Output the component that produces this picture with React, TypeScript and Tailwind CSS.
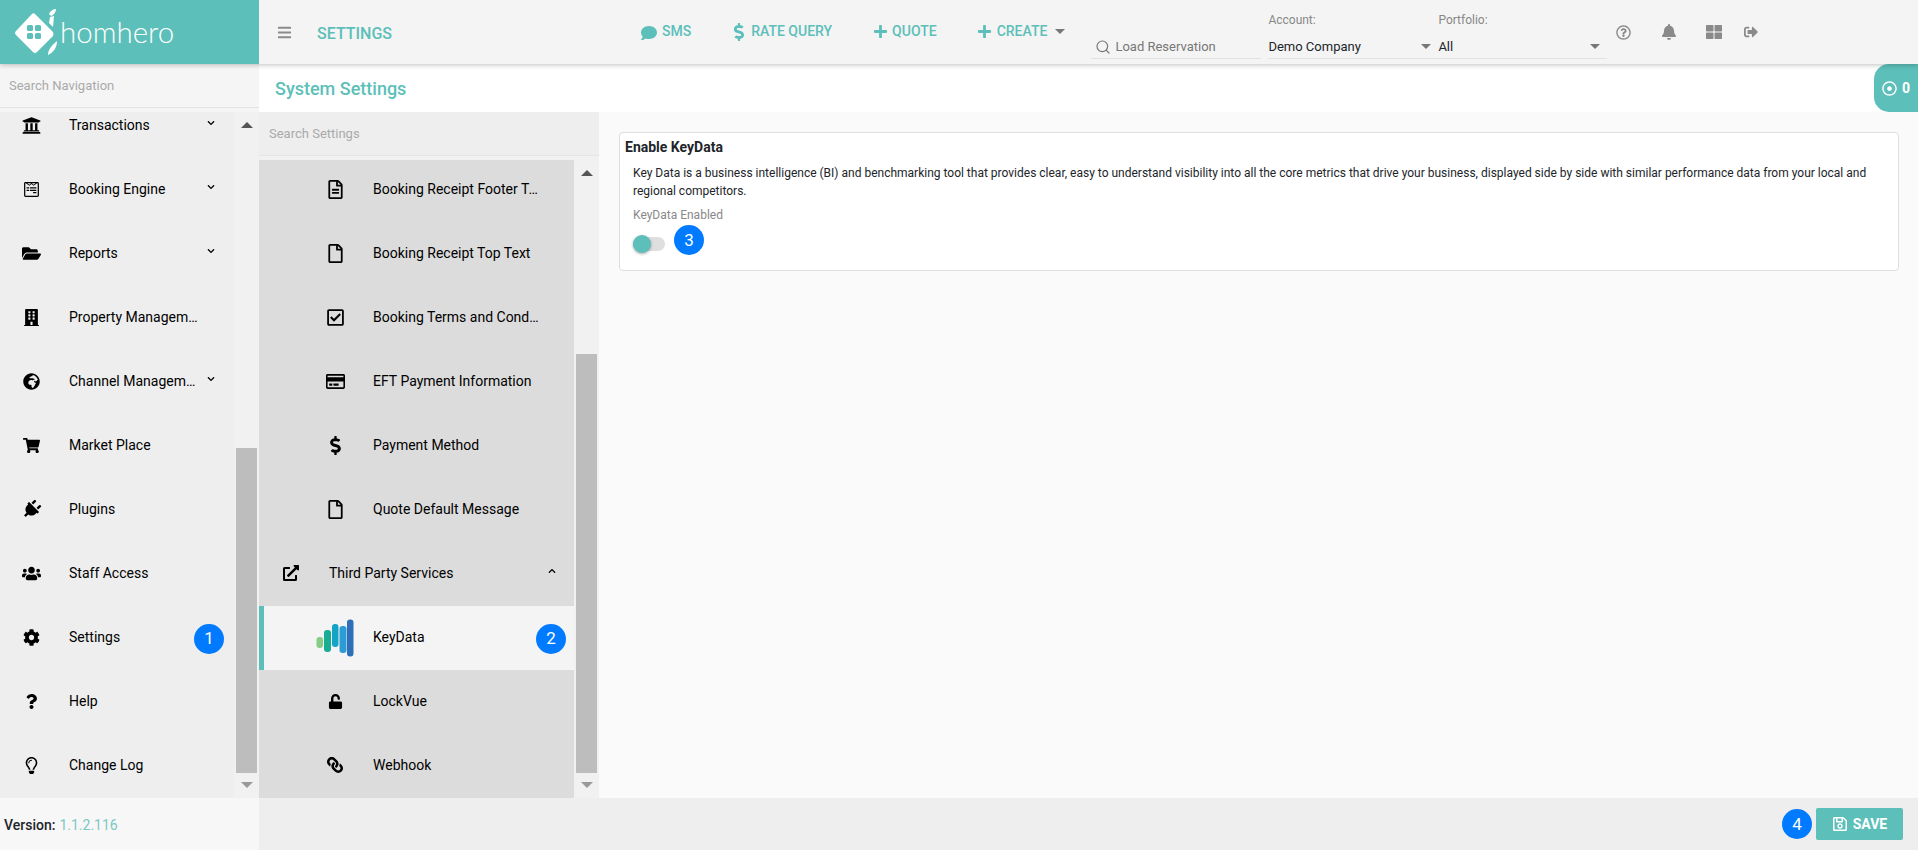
import React from "react";
import { Search } from "lucide-react";
import {
  FaBars, FaBell, FaBuilding, FaChevronDown, FaChevronUp, FaCog, FaComment, FaDollarSign, FaExternalLinkAlt,
  FaFolderOpen, FaGlobeAfrica, FaLink, FaPlug, FaPlus, FaQuestion, FaRegCheckSquare, FaRegCreditCard, FaRegDotCircle,
  FaRegFile, FaRegFileAlt, FaRegLightbulb, FaRegQuestionCircle, FaRegSave, FaShoppingCart, FaSignOutAlt,
  FaThLarge, FaUniversity, FaUnlock, FaUsers, FaWpforms,
} from "react-icons/fa";

function Badge({ n, className = "" }: { n: number; className?: string }) {
  return (
    <span className={"flex h-[30px] w-[30px] shrink-0 items-center justify-center rounded-full bg-[#007bff] text-[17px] leading-none text-white " + className}>
      {n}
    </span>
  );
}

function Caret({ className = "" }: { className?: string }) {
  return <span className={"block h-0 w-0 border-x-[5px] border-t-[5px] border-x-transparent border-t-[#777] " + className} />;
}

function ScrollArrow({ up }: { up?: boolean }) {
  return up ? (
    <span className="block h-0 w-0 border-x-[6px] border-b-[6px] border-x-transparent border-b-[#555]" />
  ) : (
    <span className="block h-0 w-0 border-x-[6px] border-t-[6px] border-x-transparent border-t-[#999]" />
  );
}

function NavRow({ icon, label, chevron, badge }: { icon: React.ReactNode; label: string; chevron?: boolean; badge?: number }) {
  return (
    <div className="flex h-[64px] shrink-0 items-center text-black">
      <span className="flex w-[69px] shrink-0 justify-center pr-[7px] text-[19px]">{icon}</span>
      <span className="w-[130px] shrink-0 truncate text-[14px]">{label}</span>
      {chevron && <FaChevronDown className="-mt-[4px] ml-[8px] text-[8px]" />}
      {badge && <Badge n={badge} className="-ml-[5px] mt-[3px]" />}
    </div>
  );
}

function SettingRow({ icon, label, className = "h-[64px]" }: { icon: React.ReactNode; label: string; className?: string }) {
  return (
    <div className={"flex shrink-0 items-center text-black " + className}>
      <span className="flex w-[114px] shrink-0 justify-center pl-[38px] text-[19px]">{icon}</span>
      <span className="w-[168px] shrink-0 truncate text-[14px]">{label}</span>
    </div>
  );
}

function KeyDataLogo() {
  return (
    <svg width="38" height="38" viewBox="0 0 38 38" className="block">
      <rect x="0.5" y="18" width="6.5" height="11" rx="3" fill="#86cc84" />
      <rect x="8" y="11" width="7" height="22" rx="3" fill="#19ad94" />
      <rect x="16" y="5" width="6.5" height="23" rx="3" fill="#14a5c6" />
      <rect x="23.5" y="7" width="7" height="27" rx="3" fill="#2d9bd4" />
      <rect x="31" y="0.5" width="6.5" height="37" rx="3" fill="#2f6fb8" />
    </svg>
  );
}

function Logo() {
  return (
    <svg width="50" height="50" viewBox="0 0 50 50" className="block shrink-0">
      <path d="M24 7 L42 25 Q43 27 42 29 L26 45 Q24 47 22 45 L5 28 Q3 26 5 24 L20 8 Q22 5 24 7 Z" fill="#fff" />
      <path d="M38 7 C39 4 42 2 45 2 C45 5 43 8 40 9 Z M39 10 L43 9 L42 20 L38 16 Z" fill="#fff" />
      <path d="M37 48 C37 43 40 39 46 34 C46 40 43 45 37 48 Z" fill="#fff" />
      <g fill="#5cbfb9">
        <rect x="16" y="18" width="6" height="6" rx="1.5" />
        <rect x="24" y="18" width="6" height="6" rx="1.5" />
        <rect x="16" y="26" width="6" height="6" rx="1.5" />
        <rect x="24" y="26" width="6" height="6" rx="1.5" />
      </g>
    </svg>
  );
}

function TopLink({ icon, label, className = "" }: { icon: React.ReactNode; label: string; className?: string }) {
  return (
    <div className={"flex items-center text-[14px] font-medium text-[#5cbfb9] " + className}>
      {icon}
      <span>{label}</span>
    </div>
  );
}

export default function App() {
  return (
    <div className="flex h-[850px] w-[1918px] flex-col overflow-hidden bg-white font-['Roboto',sans-serif]">
      <header className="relative z-10 flex h-[64px] shrink-0 bg-[#f4f4f4] shadow-[0_1px_5px_rgba(0,0,0,0.25)]">
        <div className="flex w-[259px] shrink-0 items-center bg-[#5cbfb9] pl-[11px] text-white">
          <Logo />
          <span className="-ml-[1px] font-['Lato',sans-serif] text-[29.5px] font-light leading-none">homhero</span>
        </div>
        <div className="flex h-full items-start">
          <FaBars className="ml-[18px] mt-[25px] text-[15px] text-[#8a8a8a]" />
          <span className="ml-[25px] mt-[22px] text-[16px] font-medium text-[#5cbfb9]">SETTINGS</span>
          <TopLink className="ml-[249px] mt-[21px]" icon={<FaComment className="mr-[5px] mt-[2px] text-[16px]" />} label="SMS" />
          <TopLink className="ml-[39px] mt-[21px]" icon={<FaDollarSign className="mr-[3px] text-[18px]" />} label="RATE QUERY" />
          <TopLink className="ml-[41px] mt-[21px]" icon={<FaPlus className="mr-[4px] text-[15px]" />} label="QUOTE" />
          <TopLink className="ml-[40px] mt-[21px]" icon={<FaPlus className="mr-[5px] text-[15px]" />} label="CREATE" />
          <Caret className="ml-[8px] mt-[29px] border-t-[#5cbfb9]" />
          <div className="ml-[26px] mt-[34px] flex h-[25px] w-[170px] items-center border-b border-[#e2e2e2] pl-[4px] pt-[2px]">
            <Search size={16} strokeWidth={1.8} className="mr-[4px] text-[#777]" />
            <span className="text-[13px] text-[#777]">Load Reservation</span>
          </div>
          <div className="ml-[7px] mt-[13px] w-[170px] border-b border-[#e2e2e2]">
            <div className="text-[12px] leading-[14px] text-[#888]">Account:</div>
            <div className="mt-[8px] flex h-[23px] items-center pr-[7px] text-[13px] text-[#212529]">
              Demo Company
              <Caret className="ml-auto" />
            </div>
          </div>
          <div className="mt-[13px] w-[169px] border-b border-[#e2e2e2]">
            <div className="text-[12px] leading-[14px] text-[#888]">Portfolio:</div>
            <div className="mt-[8px] flex h-[23px] items-center pr-[7px] text-[13px] text-[#212529]">
              All
              <Caret className="ml-auto" />
            </div>
          </div>
          <FaRegQuestionCircle className="ml-[9px] mt-[25px] text-[15px] text-[#8a8a8a]" />
          <FaBell className="ml-[30px] mt-[24px] text-[16px] text-[#8a8a8a]" />
          <FaThLarge className="ml-[29px] mt-[24px] text-[16px] text-[#8a8a8a]" />
          <FaSignOutAlt className="ml-[22px] mt-[25px] text-[14px] text-[#8a8a8a]" />
        </div>
      </header>

      <div className="flex min-h-0 flex-1">
        <aside className="flex w-[259px] shrink-0 flex-col bg-[#f5f5f5]">
          <div className="h-[44px] shrink-0 border-b border-[#e2e2e2] pl-[9px] pt-[14px] text-[13px] leading-[16px] text-[#aaa]">Search Navigation</div>
          <div className="mt-[4px] flex min-h-0 flex-1">
            <div className="flex w-[234px] flex-col overflow-hidden bg-[#eeeeee]">
              <div className="-mt-[19px] flex flex-col">
                <NavRow icon={<FaUniversity />} label="Transactions" chevron />
                <NavRow icon={<FaWpforms className="text-[17px]" />} label="Booking Engine" chevron />
                <NavRow icon={<FaFolderOpen />} label="Reports" chevron />
                <NavRow icon={<FaBuilding className="text-[17px]" />} label="Property Management" />
                <NavRow icon={<FaGlobeAfrica className="text-[17px]" />} label="Channel Management" chevron />
                <NavRow icon={<FaShoppingCart className="text-[17px]" />} label="Market Place" />
                <NavRow icon={<FaPlug className="rotate-45" />} label="Plugins" />
                <NavRow icon={<FaUsers />} label="Staff Access" />
                <NavRow icon={<FaCog className="text-[17px]" />} label="Settings" badge={1} />
                <NavRow icon={<FaQuestion className="text-[15px]" />} label="Help" />
                <NavRow icon={<FaRegLightbulb className="text-[17px]" />} label="Change Log" />
              </div>
            </div>
            <div className="flex w-[25px] flex-col items-center bg-[#f1f1f1] pt-[10px]">
              <ScrollArrow up />
              <div className="mt-[320px] h-[325px] w-[21px] shrink-0 bg-[#bdbdbd]" />
              <div className="mt-[9px]"><ScrollArrow /></div>
            </div>
          </div>
          <div className="flex h-[52px] shrink-0 items-center bg-[#f7f7f7] pl-[4px] pt-[2px] text-[14px]">
            <span className="font-medium text-[#212529]">Version:</span>
            <span className="ml-[4px] text-[#7cc8c3]">1.1.2.116</span>
          </div>
        </aside>

        <main className="flex min-w-0 flex-1 flex-col">
          <div className="flex h-[48px] shrink-0 items-center bg-white pl-[16px]">
            <h1 className="text-[18px] font-medium text-[#5cbfb9]">System Settings</h1>
            <div className="ml-auto flex h-full w-[44px] items-center justify-center rounded-l-[15px] bg-[#5cbfb9] text-[14px] font-bold text-white">
              <FaRegDotCircle className="mr-[5px] text-[15px]" />0
            </div>
          </div>
          <div className="flex min-h-0 flex-1">
            <section className="flex w-[340px] shrink-0 flex-col bg-[#f1f1f1]">
              <div className="h-[44px] shrink-0 border-b border-[#e4e4e4] bg-[#eeeeee] pl-[10px] pt-[14px] text-[13px] leading-[16px] text-[#aaa]">Search Settings</div>
              <div className="mt-[4px] flex min-h-0 flex-1">
                <div className="flex w-[315px] flex-col overflow-hidden bg-[#dcdcdc]">
                  <div className="-mt-[3px] flex flex-col">
                    <SettingRow icon={<FaRegFileAlt />} label="Booking Receipt Footer Text" />
                    <SettingRow icon={<FaRegFile />} label="Booking Receipt Top Text" />
                    <SettingRow icon={<FaRegCheckSquare />} label="Booking Terms and Conditions" />
                    <SettingRow icon={<FaRegCreditCard className="text-[19px]" />} label="EFT Payment Information" />
                    <SettingRow icon={<FaDollarSign />} label="Payment Method" />
                    <SettingRow icon={<FaRegFile />} label="Quote Default Message" />
                    <div className="flex h-[65px] shrink-0 items-center pb-[1px] text-black">
                      <span className="flex w-[70px] shrink-0 justify-center pr-[6px] text-[16px]"><FaExternalLinkAlt /></span>
                      <span className="text-[14px]">Third Party Services</span>
                      <FaChevronUp className="-mt-[4px] ml-auto mr-[18px] text-[8px]" />
                    </div>
                    <div className="flex h-[64px] shrink-0 items-center border-l-[5px] border-[#5cbfb9] bg-[#f4f4f4] pb-[2px] text-black">
                      <span className="ml-[52px] w-[57px] shrink-0 pt-[1px]"><KeyDataLogo /></span>
                      <span className="text-[14px]">KeyData</span>
                      <Badge n={2} className="ml-auto mr-[8px] mt-[3px]" />
                    </div>
                    <SettingRow className="h-[63px]" icon={<FaUnlock className="text-[15px]" />} label="LockVue" />
                    <SettingRow icon={<FaLink className="scale-x-[-1] text-[16px]" />} label="Webhook" />
                  </div>
                </div>
                <div className="flex w-[25px] flex-col items-center pt-[10px]">
                  <ScrollArrow up />
                  <div className="mt-[178px] h-[419px] w-[21px] shrink-0 bg-[#bdbdbd]" />
                  <div className="mt-[9px]"><ScrollArrow /></div>
                </div>
              </div>
            </section>
            <div className="min-w-0 flex-1 bg-[#fafafa] pl-[20px] pr-[19px] pt-[20px]">
              <div className="h-[139px] rounded-[4px] border border-[#dedede] bg-white pl-[5px] pr-[8px] pt-[5px]">
                <h2 className="text-[14px] font-bold leading-[18px] text-[#212529]">Enable KeyData</h2>
                <p className="mt-[8px] pl-[8px] text-[12px] leading-[18px] text-[#212529]">
                  Key Data is a business intelligence (BI) and benchmarking tool that provides clear, easy to understand visibility into all the core metrics that drive your business, displayed side by side with similar performance data from your local and regional competitors.
                </p>
                <div className="mt-[6px] pl-[8px] text-[12px] leading-[18px] text-[#888]">KeyData Enabled</div>
                <div className="mt-[1px] flex items-center pl-[8px]">
                  <div className="relative mt-[7px] h-[14px] w-[32px] rounded-full bg-[#dfdfdf]">
                    <span className="absolute -top-[2px] left-0 h-[18px] w-[18px] rounded-full bg-[#5cbfb9] shadow-[0_1px_3px_rgba(0,0,0,0.35)]" />
                  </div>
                  <Badge n={3} className="ml-[9px]" />
                </div>
              </div>
            </div>
          </div>
          <div className="flex h-[52px] shrink-0 items-center justify-end bg-[#eeeeee] pr-[15px]">
            <Badge n={4} className="mr-[4px]" />
            <button className="flex h-[32px] w-[87px] items-center justify-center rounded-[2px] bg-[#5cbfb9] text-[14px] font-bold text-white">
              <FaRegSave className="mr-[5px] text-[16px]" />SAVE
            </button>
          </div>
        </main>
      </div>
    </div>
  );
}
